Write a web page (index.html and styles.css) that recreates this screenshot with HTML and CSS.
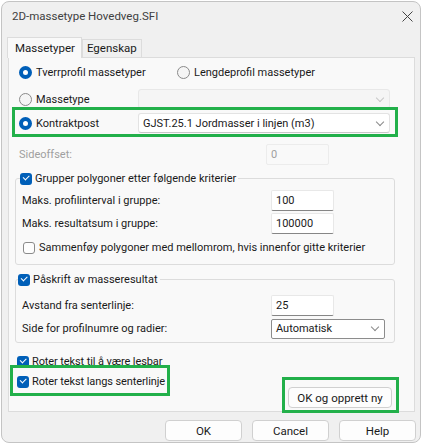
FILE: index.html
```html
<!DOCTYPE html>
<html lang="no">
<head>
<meta charset="UTF-8">
<title>2D-massetype Hovedveg.SFI</title>
<link rel="stylesheet" href="styles.css">
</head>
<body>
<div class="window">
  <div class="titlebar">
    <span class="title">2D-massetype Hovedveg.SFI</span>
    <svg class="close" width="11" height="11" viewBox="0 0 11 11"><path d="M0.5 0.5L10.5 10.5M10.5 0.5L0.5 10.5" stroke="#444" stroke-width="1"/></svg>
  </div>

  <div class="tabs">
    <div class="tab active">Massetyper</div>
    <div class="tab">Egenskap</div>
  </div>

  <div class="panel">
    <div class="row radios">
      <label class="opt first"><span class="radio on"></span>Tverrprofil massetyper</label>
      <label class="opt"><span class="radio"></span>Lengdeprofil massetyper</label>
    </div>

    <div class="row pick">
      <label class="opt"><span class="radio"></span>Massetype</label>
      <div class="combo disabled"><span></span><i class="chev"></i></div>
    </div>

    <div class="row pick kontrakt">
      <label class="opt"><span class="radio on"></span>Kontraktpost</label>
      <div class="combo"><span>GJST.25.1 Jordmasser i linjen (m3)</span><i class="chev"></i></div>
    </div>

    <div class="row side">
      <span class="muted">Sideoffset:</span>
      <div class="field disabled">0</div>
    </div>

    <fieldset class="group first">
      <legend><span class="check on"></span>Grupper polygoner etter følgende kriterier</legend>
      <div class="line"><span>Maks. profilinterval i gruppe:</span><div class="field">100</div></div>
      <div class="line"><span>Maks. resultatsum i gruppe:</span><div class="field">100000</div></div>
      <label class="opt chk"><span class="check"></span>Sammenføy polygoner med mellomrom, hvis innenfor gitte kriterier</label>
    </fieldset>

    <fieldset class="group second">
      <legend><span class="check on"></span>Påskrift av masseresultat</legend>
      <div class="line"><span>Avstand fra senterlinje:</span><div class="field">25</div></div>
      <div class="line"><span>Side for profilnumre og radier:</span><div class="combo small"><span>Automatisk</span><i class="chev"></i></div></div>
    </fieldset>

    <div class="bottom">
      <div class="checks">
        <label class="opt"><span class="check on"></span>Roter tekst til å være lesbar</label>
        <label class="opt"><span class="check on"></span>Roter tekst langs senterlinje</label>
      </div>
      <button class="btn new">OK og opprett ny</button>
    </div>
  </div>

  <div class="footer">
    <button class="btn">OK</button>
    <button class="btn">Cancel</button>
    <button class="btn">Help</button>
  </div>

  <div class="mark m1"></div>
  <div class="mark m2"></div>
  <div class="mark m3"></div>
</div>
</body>
</html>
```

FILE: styles.css
```css
body {
    margin: 0;
    background: #ffffff;
    font-family: Roboto, "Liberation Sans", sans-serif;
    font-size: 11px;
    color: #1a1a1a;
}

.window {
    position: relative;
    width: 420px;
    height: 442px;
    margin: 1px 0 0 1px;
    box-sizing: border-box;
    background: #f0f0f0;
    border: 1px solid #c4c4c4;
    border-radius: 8px;
    display: flex;
    flex-direction: column;
}

.titlebar {
    height: 34px;
    display: flex;
    align-items: center;
    justify-content: space-between;
    padding: 0 7px 6px 10px;
    box-sizing: border-box;
}

.title {
    color: #404040;
    font-size: 11.5px;
}

.tabs {
    display: flex;
    align-items: flex-end;
    padding-left: 5px;
    height: 21px;
}

.tab {
    height: 17px;
    padding: 0 4px;
    line-height: 17px;
    border: 1px solid #dcdcdc;
    border-bottom: none;
    background: #f0f0f0;
    font-size: 11.5px;
}

.tab.active {
    height: 20px;
    line-height: 20px;
    padding: 0 6px 0 7px;
    background: #f9f9f9;
    position: relative;
    top: 1px;
}

.panel {
    margin: 0 5px 0 6px;
    height: 355px;
    box-sizing: border-box;
    border: 1px solid #dcdcdc;
    background: #f9f9f9;
    padding: 4px 0 0 10px;
}

.row {
    display: flex;
    align-items: center;
    height: 20px;
}

.opt {
    display: flex;
    align-items: center;
    gap: 4px;
    height: 13px;
}

.radios .first {
    width: 158px;
}

.radio {
    width: 13px;
    height: 13px;
    border: 1px solid #8a8a8a;
    border-radius: 50%;
    background: #f5f5f5;
    box-sizing: border-box;
}

.radio.on {
    border: 4px solid #005fb8;
    background: #ffffff;
}

.check {
    width: 12px;
    height: 12px;
    border: 1px solid #8a8a8a;
    border-radius: 3px;
    box-sizing: border-box;
    background: #fdfdfd;
    position: relative;
}

.check.on {
    border: none;
    background: #005fb8;
}

.check.on::after {
    content: "";
    position: absolute;
    left: 3px;
    top: 2.5px;
    width: 5px;
    height: 2.5px;
    border-left: 1.2px solid #ffffff;
    border-bottom: 1.2px solid #ffffff;
    transform: rotate(-45deg);
}

.pick {
    justify-content: space-between;
    width: 371px;
}

.radios {
    margin-bottom: 7px;
}

.combo {
    width: 252px;
    height: 20px;
    box-sizing: border-box;
    background: #ffffff;
    border: 1px solid #e3e3e3;
    border-bottom-color: #c8c8c8;
    border-radius: 3px;
    display: flex;
    align-items: center;
    justify-content: space-between;
    padding: 0 6px 0 4px;
}

.combo.disabled {
    background: #f5f5f5;
    border-color: #e8e8e8;
}

.chev {
    width: 5px;
    height: 5px;
    border-right: 1px solid #8a8a8a;
    border-bottom: 1px solid #8a8a8a;
    transform: rotate(45deg);
    margin-top: -3px;
}

.disabled .chev {
    border-color: #c8c8c8;
}

.kontrakt {
    margin-top: 4px;
}

.side {
    margin-top: 10px;
    height: 22px;
    width: 310px;
    justify-content: space-between;
}

.muted {
    color: #a0a0a0;
}

.field {
    width: 63px;
    height: 21px;
    box-sizing: border-box;
    background: #ffffff;
    border: 1px solid #e8e8e8;
    border-bottom-color: #868686;
    border-radius: 2px;
    padding: 3px 0 0 4px;
}

.field.disabled {
    background: #f9f9f9;
    border-color: #ececec;
    color: #a0a0a0;
}

.group {
    margin: 0 0 0 -4px;
    width: 380px;
    box-sizing: border-box;
    border: 1px solid #dcdcdc;
    border-radius: 3px;
    padding: 0 0 10px 6px;
    min-inline-size: 0;
}

.group legend {
    display: flex;
    align-items: center;
    gap: 3px;
    height: 13px;
    padding: 0 2px 0 0;
    margin-left: -2px;
}

.group.first {
    margin-top: 7px;
}

.group.second {
    margin-top: 8px;
    padding-bottom: 3px;
}

.group.second legend {
    margin-left: -4px;
}

.line {
    display: grid;
    grid-template-columns: 249px auto;
    align-items: center;
    height: 21px;
    margin-top: 2px;
}

.group.first .line:first-of-type {
    margin-top: 5px;
}

.group.second .line:first-of-type {
    margin-top: 9px;
}

.combo.small {
    width: 114px;
    border-color: #8c8c8c;
    border-radius: 2px;
}

.chk {
    margin-top: 7px;
    margin-left: 1px;
}

.bottom {
    display: flex;
    justify-content: space-between;
    align-items: flex-start;
    width: 373px;
    margin-top: 12px;
}

.checks {
    display: flex;
    flex-direction: column;
    gap: 7px;
    margin-left: -2px;
    letter-spacing: -0.1px;
}

.checks .opt {
    gap: 3px;
}

.btn {
    font: inherit;
    font-size: 11.5px;
    color: #1a1a1a;
    background: #fdfdfd;
    border: 1px solid #d0d0d0;
    border-radius: 4px;
    height: 21px;
    padding: 0;
}

.new {
    width: 104px;
    margin-top: 32px;
}

.footer {
    display: flex;
    justify-content: flex-end;
    gap: 10px;
    padding: 8px 4px 0 0;
}

.footer .btn {
    width: 77px;
}

.mark {
    position: absolute;
    border: 3px solid #22b04a;
}

.m1 {
    left: 10px;
    top: 105px;
    width: 380px;
    height: 24px;
}

.m2 {
    left: 8px;
    top: 363px;
    width: 154px;
    height: 25px;
}

.m3 {
    left: 280px;
    top: 375px;
    width: 111px;
    height: 30px;
}
```
